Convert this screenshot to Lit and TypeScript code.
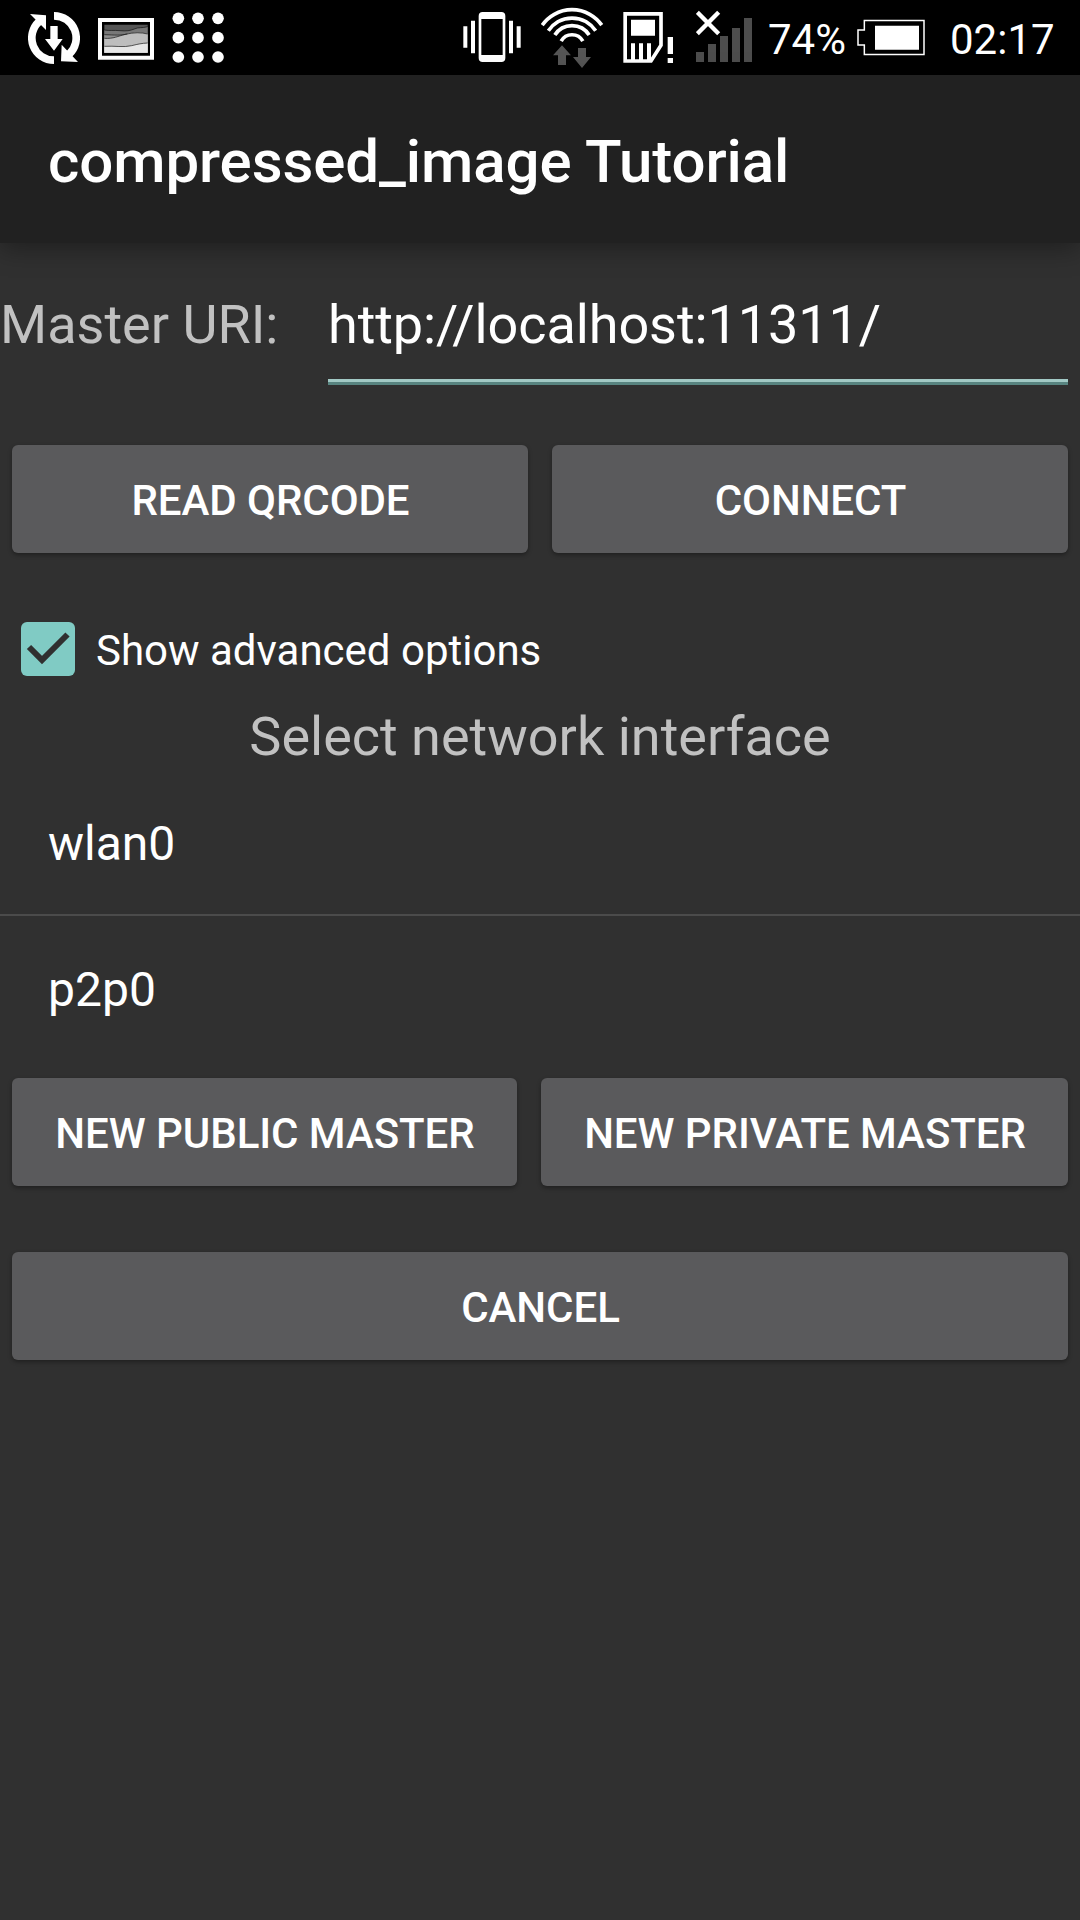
import { LitElement, html, svg, css } from "lit";
import { customElement, property, state } from "lit/decorators.js";

@customElement("status-bar")
class StatusBar extends LitElement {
  static styles = css`
    :host {
      display: flex;
      justify-content: space-between;
      height: 75px;
      background: #000;
      color: #fff;
      font: 400 42px/79px Roboto, sans-serif;
    }
    .group {
      display: flex;
      align-items: flex-start;
      white-space: nowrap;
    }
    .left {
      padding-left: 28px;
      gap: 18px;
    }
    .right {
      padding-right: 24px;
    }
    svg {
      display: block;
      flex: none;
      height: 75px;
    }
    .sync { width: 52px; }
    .picture { width: 56px; }
    .dots { width: 52px; }
    .vibrate { width: 58px; margin-right: 20px; }
    .wifi { width: 63px; margin-right: 19px; }
    .sim { width: 50px; margin-right: 23px; }
    .signal { width: 56px; }
    .percent { width: 89px; margin-left: 16px; }
    .battery { width: 68px; margin-right: 25px; }
    .clock { width: 106px; }
  `;

  render() {
    return html`
      <div class="group left">
        <svg class="sync" viewBox="84 0 156 225">
          <g fill="none" stroke="#fff" stroke-width="23">
            <path d="M162 47.5A66.500 66.500 0 0 1 207 163" />
            <path d="M162 180.500A66.500 66.500 0 0 1 117 65" />
          </g>
          <path fill="#fff" d="M185 134L183 184L234 186ZM90 42L138 46L138 90Z" />
          <path fill="#fff" d="M151 78H173V117H188L162 152L135 117H151Z" />
        </svg>
        <svg class="picture" viewBox="294 0 168 225">
          <path fill="#fff" d="M294 54H462V179H294Z" />
          <path fill="#000" d="M306 66H450V167H306Z" />
          <path fill="#555" d="M313 74H443V158H313Z" />
          <path fill="#777" d="M313 90C330 93 340 90 360 92C380 94 390 92 403 87C415 81 425 85 443 80V158H313Z" />
          <path fill="#8e8e8e" d="M313 104C345 105 360 107 382 102C400 98 425 97 443 101V158H313Z" />
          <path fill="#bdbdbd" d="M313 115C340 117 355 108 376 103C400 97 425 97 443 102V158H313Z" />
          <path fill="#e6e6e6" d="M313 139C345 137 370 143 395 137C415 132 425 130 443 129V158H313Z" />
          <g fill="none" stroke="#111" stroke-width="2">
            <path d="M313 90C330 93 340 90 360 92C380 94 390 92 403 87C415 81 425 85 443 80" />
            <path d="M313 104C345 105 360 107 382 102" />
            <path d="M313 115C340 117 355 108 376 103C400 97 425 97 443 102" />
            <path d="M313 139C345 137 370 143 395 137C415 132 425 130 443 129" />
          </g>
        </svg>
        <svg class="dots" viewBox="516 0 156 225" fill="#fff">
          ${[55, 113, 171].map((y) =>
            [535, 594, 654].map((x) => svg`<circle cx=${x} cy=${y} r="17.500" />`)
          )}
        </svg>
      </div>
      <div class="group right">
        <svg class="vibrate" viewBox="39 0 174 225" fill="#fff">
          <path fill-rule="evenodd" d="M98 36H154Q166 36 166 48V174Q166 186 154 186H98Q86 186 86 174V48Q86 36 98 36ZM94 57V165H158V57Z" />
          <path d="M40 79H52V143H40ZM63 62H75V160H63ZM177 62H189V160H177ZM200 79H212V143H200Z" />
        </svg>
        <svg class="wifi" viewBox="273 0 189 225">
          <g fill="none" stroke="#fff" stroke-width="11">
            <path d="M276.700 75.500A109 109 0 0 1 455.300 75.500" />
            <path d="M295 92.500A85 85 0 0 1 437 92.500" />
            <path d="M314.500 105A61 61 0 0 1 417.500 105" />
            <path d="M333.500 123.500A37 37 0 0 1 398.500 123.500" />
          </g>
          <path fill="#555" d="M336 136L363 166H348V195H324V166H309ZM384 144H408V171H423L396 204L369 171H384Z" />
        </svg>
        <svg class="sim" viewBox="519 0 150 225">
          <path fill="none" stroke="#fff" stroke-width="11" d="M525.500 41.500H633V136L603 183H525.500Z" />
          <path fill="#fff" d="M543 59H615V107H543ZM543 130H555V183H543ZM567 130H579V183H567ZM591 130H603V183H591ZM653 111H669V162H653ZM653 174H669V189H653Z" />
        </svg>
        <svg class="signal" viewBox="738 0 168 225">
          <path fill="#4d4d4d" d="M738 156H762V186H738ZM774 132H798V186H774ZM810 108H834V186H810ZM846 84H870V186H846ZM882 54H906V186H882Z" />
          <path stroke="#fff" stroke-width="13" d="M742 37L806 101M806 37L742 101" />
        </svg>
        <span class="percent">74%</span>
        <svg class="battery" viewBox="321 0 204 225">
          <path fill="none" stroke="#fff" stroke-width="4.500" d="M343 61.500H522V163.500H343V135H324V90H343Z" />
          <path fill="#fff" d="M375 77H507V149H375Z" />
        </svg>
        <span class="clock">02:17</span>
      </div>
    `;
  }
}

@customElement("material-button")
class MaterialButton extends LitElement {
  @property() label = "";

  static styles = css`
    :host {
      display: block;
    }
    .button {
      display: block;
      box-sizing: border-box;
      width: 100%;
      height: 108px;
      padding: 3px 0 0 1px;
      border: 0;
      border-radius: 6px;
      background: #5a5a5c;
      box-shadow: 0 2px 4px rgba(0, 0, 0, 0.35);
      color: #fff;
      font: 500 42px/105px Roboto, sans-serif;
      letter-spacing: -0.06px;
      text-align: center;
      white-space: nowrap;
    }
  `;

  render() {
    return html`<button class="button">${this.label}</button>`;
  }
}

@customElement("app-root")
class AppRoot extends LitElement {
  @state() private advanced = true;
  private interfaces = ["wlan0", "p2p0"];

  static styles = css`
    :host {
      display: flex;
      flex-direction: column;
      width: 1080px;
      height: 1920px;
      overflow: hidden;
      background: #303030;
      color: #fff;
      font-family: Roboto, sans-serif;
    }
    .appbar {
      flex: none;
      box-sizing: border-box;
      height: 168px;
      padding-left: 48px;
      background: #212121;
      box-shadow: 0 6px 24px rgba(0, 0, 0, 0.35);
      font: 500 60px/173px Roboto, sans-serif;
      letter-spacing: -0.08px;
    }
    .uri {
      display: grid;
      grid-template-columns: 328px 740px;
      height: 142px;
      font-size: 54px;
      line-height: 163px;
    }
    .label {
      color: #c1c1c1;
    }
    .field {
      box-sizing: border-box;
      height: 142px;
      border-bottom: 3px solid #588480;
      box-shadow: inset 0 -3px #a2c9c5;
      letter-spacing: -0.09px;
    }
    .row {
      display: grid;
      gap: 24px;
      padding: 0 12px;
    }
    .connect {
      grid-template-columns: 1fr 1fr;
      margin-top: 60px;
    }
    .masters {
      grid-template-columns: 505px 527px;
    }
    .cancel {
      margin-top: 66px;
    }
    .option {
      display: flex;
      align-items: center;
      gap: 21px;
      height: 54px;
      margin-top: 69px;
      padding-left: 21px;
    }
    .caption {
      padding-top: 3px;
      font-size: 42px;
      line-height: 55px;
    }
    .box {
      display: block;
      width: 54px;
      height: 54px;
    }
    .heading {
      height: 94px;
      color: #c1c1c1;
      font-size: 54px;
      line-height: 121px;
      text-align: center;
    }
    .item {
      box-sizing: border-box;
      height: 144px;
      padding-left: 48px;
      font-size: 48px;
      line-height: 147px;
    }
    .item + .item {
      height: 164px;
      border-top: 2px solid #4b4b4b;
    }
  `;

  render() {
    return html`
      <status-bar></status-bar>
      <div class="appbar">compressed_image Tutorial</div>
      <div class="uri">
        <div class="label">Master URI:</div>
        <div class="field">http://localhost:11311/</div>
      </div>
      <div class="row connect">
        <material-button label="READ QRCODE"></material-button>
        <material-button label="CONNECT"></material-button>
      </div>
      <div class="option" @click=${() => (this.advanced = !this.advanced)}>
        <svg class="box" viewBox="0 0 54 54">
          <rect width="54" height="54" rx="6" fill="#80cbc4" />
          ${this.advanced
            ? svg`<path fill="none" stroke="#303030" stroke-width="6" d="M8 25L21 38L46.500 12.500" />`
            : null}
        </svg>
        <span class="caption">Show advanced options</span>
      </div>
      <div class="heading">Select network interface</div>
      <div class="list">
        ${this.interfaces.map((name) => html`<div class="item">${name}</div>`)}
      </div>
      <div class="row masters">
        <material-button label="NEW PUBLIC MASTER"></material-button>
        <material-button label="NEW PRIVATE MASTER"></material-button>
      </div>
      <div class="row cancel">
        <material-button label="CANCEL"></material-button>
      </div>
    `;
  }
}
